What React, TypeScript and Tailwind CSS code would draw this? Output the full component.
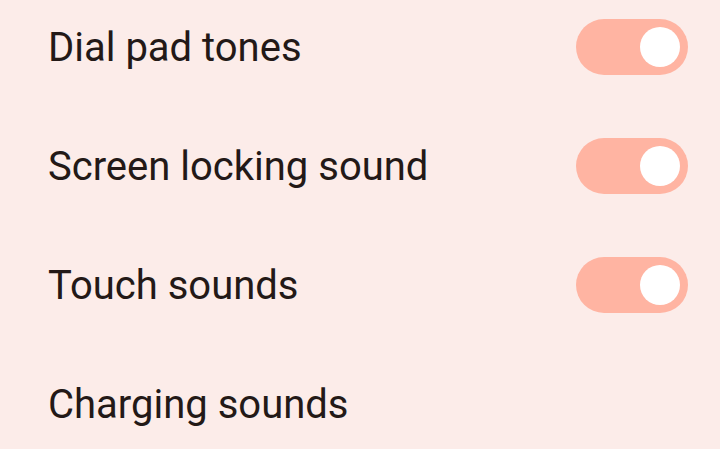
import React, { useState } from 'react';

interface SettingRow {
  id: string;
  label: string;
  enabled?: boolean;
}

const rows: SettingRow[] = [
  { id: 'dialpad', label: 'Dial pad tones', enabled: true },
  { id: 'lock', label: 'Screen locking sound', enabled: true },
  { id: 'touch', label: 'Touch sounds', enabled: true },
  { id: 'charging', label: 'Charging sounds' },
];

const Toggle: React.FC<{ on: boolean; onChange: () => void }> = ({ on, onChange }) => (
  <button
    type="button"
    onClick={onChange}
    className={`flex h-[56px] w-[112px] items-center rounded-full px-[8px] ${
      on ? 'justify-end bg-[#ffb4a2]' : 'justify-start bg-[#ede0dd]'
    }`}
  >
    <span className="block h-[40px] w-[40px] rounded-full bg-white" />
  </button>
);

export default function App() {
  const [state, setState] = useState<Record<string, boolean>>(
    Object.fromEntries(rows.filter((r) => r.enabled !== undefined).map((r) => [r.id, !!r.enabled]))
  );

  return (
    <div
      className="h-[449px] w-full overflow-hidden bg-[#fcece9] pl-[48px] pr-[32px] pt-[19px]"
      style={{ fontFamily: 'Roboto, "Noto Sans", sans-serif' }}
    >
      <div className="flex flex-col gap-[63px]">
        {rows.map((row) => (
          <div key={row.id} className="flex h-[56px] items-center justify-between">
            <span className="pt-[2px] text-[40px] leading-none text-[#231917]">{row.label}</span>
            {row.enabled !== undefined && (
              <Toggle
                on={state[row.id]}
                onChange={() => setState((s) => ({ ...s, [row.id]: !s[row.id] }))}
              />
            )}
          </div>
        ))}
      </div>
    </div>
  );
}
